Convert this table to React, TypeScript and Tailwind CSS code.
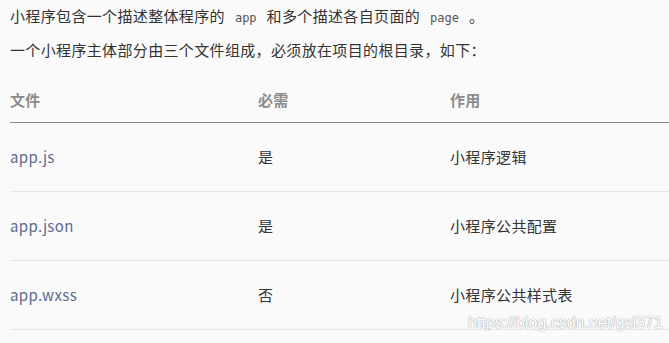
import React from "react";

const rows = [
  { file: "app.js", req: "是", use: "小程序逻辑" },
  { file: "app.json", req: "是", use: "小程序公共配置" },
  { file: "app.wxss", req: "否", use: "小程序公共样式表" },
];

export default function App() {
  return (
    <div
      className="relative w-[669px] h-[343px] overflow-hidden bg-[#fafafa] text-[#333333] text-[15px] tracking-[0.35px]"
      style={{ fontFamily: '"Noto Sans CJK SC", "Noto Sans", sans-serif' }}
    >
      <div className="pl-[10px] pt-0 leading-[31px]">
        <p>
          小程序包含一个描述整体程序的
          <code className="mx-[8px] px-[2px] text-[12px] text-[#555] tracking-normal font-['DejaVu_Sans_Mono',monospace]">app</code>
          和多个描述各自页面的
          <code className="mx-[8px] px-[2px] text-[12px] text-[#555] tracking-normal font-['DejaVu_Sans_Mono',monospace]">page</code>
          。
        </p>
        <p>一个小程序主体部分由三个文件组成，必须放在项目的根目录，如下：</p>
      </div>
      <div className="ml-[10px]">
        <div className="flex pt-[26px] pb-[13px] leading-[18px] border-b border-[#8a8a8a] font-bold text-[#8c8c8c]">
          <div className="w-[248px]">文件</div>
          <div className="w-[192px]">必需</div>
          <div className="flex-1">作用</div>
        </div>
        {rows.map((r) => (
          <div key={r.file} className="flex h-[69px] items-center border-b border-[#e6e6e6]">
            <div className="w-[248px] text-[#5b6b91]">{r.file}</div>
            <div className="w-[192px]">{r.req}</div>
            <div className="flex-1">{r.use}</div>
          </div>
        ))}
      </div>
      <div
        className="absolute left-[468px] top-[313px] text-[16px] leading-[20px] text-white tracking-normal"
        style={{
          fontFamily: '"Liberation Sans", Arial, sans-serif',
          textShadow: "0 0 1px #b0b0b0, 0 0 1px #b0b0b0, 0 0 1px #b0b0b0",
        }}
      >
        https://blog.csdn.net/gsl371
      </div>
    </div>
  );
}
